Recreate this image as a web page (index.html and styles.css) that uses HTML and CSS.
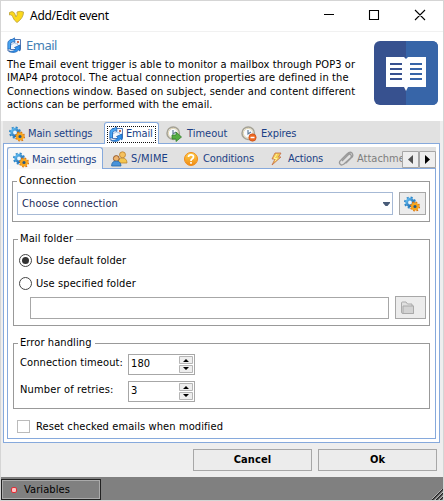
FILE: index.html
```
<!DOCTYPE html>
<html lang="en">
<head>
<meta charset="utf-8">
<title>Add/Edit event</title>
<link rel="stylesheet" href="styles.css">
</head>
<body>
<svg class="defs" width="0" height="0">
  <defs>
    <linearGradient id="blue" x1="0" y1="0" x2="1" y2="1"><stop offset="0" stop-color="#62bdf2"/><stop offset="1" stop-color="#155da5"/></linearGradient>
    <linearGradient id="gold" x1="0" y1="0" x2="0" y2="1"><stop offset="0" stop-color="#ffd34d"/><stop offset="1" stop-color="#ef8a13"/></linearGradient>
    <symbol id="gears" viewBox="0 0 16 16">
      <circle cx="6" cy="6.500" r="5" fill="none" stroke="#2b86c9" stroke-width="2" stroke-dasharray="2 1.930"/>
      <circle cx="6" cy="6.500" r="3.300" fill="#eaf5fd" stroke="url(#blue)" stroke-width="2.800"/>
      <circle cx="11" cy="10.500" r="4.200" fill="none" stroke="#d9710d" stroke-width="1.700" stroke-dasharray="1.700 1.600"/>
      <circle cx="11" cy="10.500" r="2.800" fill="#245984" stroke="#f8a51d" stroke-width="2.400"/>
    </symbol>
    <symbol id="mail" viewBox="0 0 16 16">
      <path d="M4.500 2.500h10v10h-10z" fill="#f2f7fd" stroke="#5579b5"/>
      <path d="M5 8l3-2M11 7l3 3M7 5l3 2 2-1" fill="none" stroke="#a9c4e5"/><path d="M11 4h2v2h-2z" fill="#c96d55"/>
      <path d="M8.500.8L9 5.500 7.500 4.500Q4 5 4.500 8.500V12H1.800V7Q1.500 3 6 2.500z" fill="#48a5f2" stroke="#1c62b4" stroke-width=".7"/>
      <path d="M3 14.500Q8 15 10 11.500L8.500 10.500 14 8v6l-1.500-1Q10 16.500 4 15z" fill="#2e8feb" stroke="#155cad" stroke-width=".7"/>
      <path d="M2 12v2h2" fill="none" stroke="#4d72ad"/>
    </symbol>
    <symbol id="clock" viewBox="0 0 16 16">
      <circle cx="7.200" cy="7.200" r="6.200" fill="#e9eef3" stroke="#a5a295" stroke-width="1.500"/>
      <circle cx="7.200" cy="7.200" r="4.800" fill="#f8fbff" stroke="#dccb9d" stroke-width=".8"/>
      <path d="M7 4v4l3-2" fill="none" stroke="#637d98" stroke-width="1.200"/>
    </symbol>
  </defs>
</svg>
<div class="window">
  <header class="titlebar">
    <svg class="logo" width="18" height="14" viewBox="0 0 18 14"><path d="M1.500 2.500Q4.500.5 6.500 3L8 7Q9.800 5 9 2q3-1.500 6.500 0Q15.500 8 9 12.500 6 10.500 4.500 6.500L3.500 5Q3 4.500 1.500 5z" fill="#fcd91a" stroke="#bfa640" stroke-width=".9"/></svg>
    <span class="title">Add/Edit event</span>
    <svg class="controls" width="102" height="12" viewBox="0 0 102 12"><path d="M0 5.500h10M45.500 1.500h9v9h-9zM91 1l10 10M101 1L91 11" fill="none" stroke="#000" stroke-width="1.100"/></svg>
  </header>
  <section class="intro">
    <div class="intro-main">
      <h1><svg width="16" height="16"><use href="#mail"/></svg><span>Email</span></h1>
      <p><span class="l1">The Email event trigger is able to monitor a mailbox through POP3 or</span><br><span class="l2">IMAP4 protocol. The actual connection properties are defined in the</span><br><span class="l3">Connections window. Based on subject, sender and content different</span><br><span class="l4">actions can be performed with the email.</span></p>
    </div>
    <svg class="book" width="64" height="64" viewBox="0 0 64 64">
      <rect width="64" height="64" rx="6" fill="#37518f"/><path d="M32 0h26q6 0 6 6v52q0 6-6 6H32z" fill="#3765a8"/>
      <path d="M12 16h18l2 2 2-2h18v30H34l-2 4-2-4H12z" fill="#fff"/>
      <path d="M16 23h12M16 28h12M16 33h12M16 38h12" stroke="#37518f" stroke-width="2"/><path d="M36 23h12M36 28h12M36 33h12M36 38h12" stroke="#3765a8" stroke-width="2"/>
    </svg>
  </section>
  <main class="outer">
    <nav class="tabs outer-tabs">
      <div class="tab t-main"><svg width="16" height="16"><use href="#gears"/></svg><span>Main settings</span></div>
      <div class="tab active t-email"><div class="focus"><svg width="16" height="16"><use href="#mail"/></svg><span>Email</span></div></div>
      <div class="tab t-timeout"><svg width="16" height="16" viewBox="0 0 16 16"><use href="#clock"/><path d="M6 9h4V6l5.500 5-5.500 4.500V13H6z" fill="#55ad43" stroke="#347e2d" stroke-width=".8"/></svg><span>Timeout</span></div>
      <div class="tab t-expires"><svg width="16" height="16" viewBox="0 0 16 16"><use href="#clock"/><circle cx="11.500" cy="11.500" r="3.700" fill="#ed6820" stroke="#c54a16" stroke-width=".6"/><path d="M9.500 11.500h4" stroke="#fff" stroke-width="1.500"/></svg><span>Expires</span></div>
    </nav>
    <div class="outer-page">
      <nav class="tabs inner-tabs">
        <div class="tab active i-main"><svg width="16" height="16"><use href="#gears"/></svg><span>Main settings</span></div>
        <div class="tab i-smime"><svg width="17" height="16" viewBox="0 0 17 16"><circle cx="11.500" cy="3.800" r="3" fill="#f6c15c" stroke="#b9802c" stroke-width=".8"/><path d="M7 12q0-5 4-5 5 0 5 5z" fill="#f5c64e" stroke="#ba8731" stroke-width=".8"/><circle cx="5.300" cy="7.500" r="2.900" fill="#efb56e" stroke="#8a5128" stroke-width=".9"/><path d="M.6 15q0-5 4.600-5T10 15z" fill="#4993da" stroke="#2767a7" stroke-width=".8"/></svg><span>S/MIME</span></div>
        <div class="tab i-cond"><svg width="16" height="16" viewBox="0 0 16 16"><circle cx="8" cy="8" r="6.500" fill="url(#gold)" stroke="#f18a19"/><path d="M5.500 6q0-2.200 2.500-2.200T10.500 6Q10.500 7 9 8 8 8.600 8 10M8 11v1.700" fill="none" stroke="#fff" stroke-width="1.700"/></svg><span>Conditions</span></div>
        <div class="tab i-act"><svg width="16" height="16" viewBox="0 0 16 16"><path d="M6 2h6L9.500 6H12L3 14l3-6H3z" fill="#f3cd50" stroke="#c46b48" stroke-width=".8"/><path d="M8 3L5 7.500h3L6 10" fill="none" stroke="#fff39b"/></svg><span>Actions</span></div>
        <div class="tab i-att"><svg width="16" height="16" viewBox="0 0 16 16"><path d="M4 10l6-6q2-2 3 0t-1 3.500L6 13q-3 2-4 0-1.500-2 1-4L9 3q3-3 5-1 2 3-1 5l-5 5" fill="none" stroke="#999" stroke-width="1.300"/></svg><span>Attachments</span></div>
        <svg class="scroll" width="34" height="17" viewBox="0 0 34 17"><path d="M.5.5h16v16H.5zM17.500.5h16v16h-16z" fill="#eee" stroke="#a7a7a7"/><path d="M11 4v9L6 8.500z" fill="#505050"/><path d="M23 4v9l5-4.500z"/></svg>
      </nav>
      <div class="inner-page">
        <fieldset class="connection"><legend>Connection</legend>
          <div class="row"><div class="combo"><span>Choose connection</span><svg width="7" height="4" viewBox="0 0 7 4"><path d="M0 0h7v1L4.500 4h-2L0 1z" fill="#485b78"/></svg></div><button class="gear-btn"><svg width="16" height="16"><use href="#gears"/></svg></button></div>
        </fieldset>
        <fieldset class="folder"><legend>Mail folder</legend>
          <label class="radio"><i class="checked"></i><span>Use default folder</span></label>
          <label class="radio second"><i></i><span>Use specified folder</span></label>
          <div class="row path-row"><div class="path"></div><button class="folder-btn"><svg width="16" height="14" viewBox="0 0 16 14"><path d="M1.500 11V2q0-1 1-1H6l1.500 2H12v2h1.500v7.500H3q-1.500 0-1.500-1.500z" fill="#e0e0e0" stroke="#ababab"/><path d="M3 5h10.500v7.500H3z" fill="#d3d3d3" stroke="#aaa"/></svg></button></div>
        </fieldset>
        <fieldset class="errors"><legend>Error handling</legend>
          <div class="spin-row"><span>Connection timeout:</span><div class="spin"><span>180</span><svg width="14" height="17" viewBox="0 0 14 17"><path d="M.5.5h13v7H.5zM.5 9.500h13v7H.5z" fill="#eee" stroke="#b5b5b5"/><path d="M4 6h6L7 3zM4 11h6l-3 3z"/></svg></div></div>
          <div class="spin-row retries"><span>Number of retries:</span><div class="spin"><span>3</span><svg width="14" height="17" viewBox="0 0 14 17"><path d="M.5.5h13v7H.5zM.5 9.500h13v7H.5z" fill="#eee" stroke="#b5b5b5"/><path d="M4 6h6L7 3zM4 11h6l-3 3z"/></svg></div></div>
        </fieldset>
        <label class="check"><i></i><span>Reset checked emails when modified</span></label>
      </div>
    </div>
  </main>
  <div class="actions"><button>Cancel</button><button>Ok</button></div>
  <footer><div class="variables"><i></i><span>Variables</span></div><svg class="grip" width="11" height="11" viewBox="0 0 11 11"><path d="M0 11L11 0M4 11l7-7M8 11l3-3" stroke="#222" stroke-width="1.500"/><path d="M-1 11L11-1M3 11l8-8M7 11l4-4" stroke="#ddd" stroke-width=".7"/></svg></footer>
</div>
</body>
</html>
```
FILE: styles.css
```
* { box-sizing: border-box; }
body { margin: 0; font: 11px/14px "DejaVu Sans Condensed", "DejaVu Sans", sans-serif; font-stretch: condensed; letter-spacing: .1px; color: #000; overflow: hidden; }
svg { display: block; flex: none; }
.defs { position: absolute; }
span { white-space: nowrap; }
button { font: inherit; letter-spacing: inherit; margin: 0; padding: 0; border: 1px solid #a7a7a7; background: #ececec; border-radius: 0; }
.window { width: 444px; height: 501px; border: 1px solid #d5d5d5; background: #eee; display: flex; flex-direction: column; }
.titlebar { height: 31px; background: #fff; border-bottom: 1px solid #f1f1f1; display: flex; align-items: center; padding: 0 17px 0 7px; }
.logo { margin-top: 1px; }
.title { font: 12px/16px "Noto Sans", sans-serif; letter-spacing: -.28px; margin-left: 4px; }
.controls { margin-left: auto; margin-top: -2px; }
.intro { height: 89px; background: #fff; display: flex; justify-content: space-between; padding: 5px 5px 0 5px; }
h1 { font: 13px/16px "Noto Sans", sans-serif; letter-spacing: -.5px; color: #447fb5; margin: 0 0 5px; display: flex; gap: 4px; }
.intro p { margin: 0 0 0 1px; line-height: 13.300px; }
.l1 { letter-spacing: .075px; }
.l2 { letter-spacing: .105px; }
.l3 { letter-spacing: .12px; }
.l4 { letter-spacing: .03px; }
.book { margin-top: 4px; }
.outer { margin: 0 3px 0 2px; height: 322px; }
.tabs { display: flex; background: #e1e1e1; color: #1b3f85; letter-spacing: -.15px; }
.tab { display: flex; align-items: center; gap: 3px; }
.outer-tabs { height: 22px; }
.tab.active { background: #fff; border: 1px solid #86a9dc; border-bottom: 0; border-radius: 3px 3px 0 0; position: relative; }
.t-main { width: 101px; padding: 4px 0 0 6px; }
.tab.t-email { width: 55px; margin-top: 1px; height: 22px; padding: 2px 2px 1px 2px; }
.focus { display: flex; align-items: center; gap: 2px; width: 49px; height: 17px; border: 1px dotted #111; }
.t-timeout { padding: 4px 0 0 7px; width: 75px; gap: 5px; letter-spacing: 0; }
.t-expires { padding: 4px 0 0 7px; gap: 4px; }
.outer-page { height: 300px; border: 1px solid #86a9dc; padding: 3px; background: #fff; }
.inner-tabs { height: 21px; }
.inner-tabs .active { height: 22px; background: #f7f7f7; }
.i-main { width: 96px; padding: 2px 0 0 5px; }
.i-smime { width: 72px; padding: 2px 0 0 8px; gap: 3px; letter-spacing: .2px; }
.i-cond { width: 86px; padding: 2px 0 0 8px; gap: 4px; }
.i-act { width: 69px; padding: 2px 0 0 8px; gap: 3px; }
.i-att { width: 72px; padding: 2px 0 0 8px; gap: 3px; color: #7d7d7d; overflow: hidden; letter-spacing: 0; }
.scroll { margin-top: 4px; }
.inner-page { height: 271px; border: 1px solid #86a9dc; background: #fff; padding: 5px 5px 0 4px; }
fieldset { border: 1px solid #999; margin: 0; padding: 0; min-width: 0; }
legend { height: 15px; line-height: 14px; padding: 0 3px 0 2px; margin-left: 4px; }
.row { display: flex; justify-content: space-between; }
.connection { height: 48px; }
.connection .row { padding: 3px 3px 0 4px; }
.combo { width: 376px; height: 23px; border: 1px solid #a6b9d5; display: flex; align-items: center; justify-content: space-between; padding: 0 2px 0 4px; color: #202a5a; }
.gear-btn { width: 27px; height: 23px; padding-left: 4px; }
.folder { height: 94px; margin: 10px 0 0 1px; }
.radio { display: flex; align-items: center; height: 13px; gap: 4px; margin: 7px 0 0 5px; }
.radio.second { margin-top: 10px; }
.radio i { width: 13px; height: 13px; border: 1px solid #444; border-radius: 50%; padding: 2px; background-clip: content-box; }
.radio .checked { background-color: #333; }
.path-row { padding: 6px 3px 0 16px; }
.path { width: 359px; height: 22px; margin-top: 1px; border: 1px solid #a7a7a7; }
.folder-btn { width: 31px; height: 23px; padding-left: 4px; }
.errors { height: 73px; margin: 10px 0 0 1px; padding-top: 3px; }
.spin-row { display: flex; justify-content: space-between; width: 181px; height: 21px; padding-left: 6px; margin-bottom: 6px; line-height: 18px; }
.retries { letter-spacing: .15px; }
.spin { width: 67px; height: 21px; border: 1px solid #a7a7a7; display: flex; justify-content: space-between; padding: 1px 1px 0 2px; line-height: 16px; }
.check { display: flex; gap: 6px; margin: 11px 0 0 5px; height: 13px; }
.check i { width: 13px; height: 13px; border: 1px solid #bbb; }
.actions { height: 34px; padding: 6px 6px 0 0; display: flex; justify-content: flex-end; gap: 6px; }
.actions button { width: 119px; height: 22px; font-weight: bold; }
footer { height: 23px; background: #808080; display: flex; justify-content: space-between; align-items: flex-end; }
.variables { width: 100px; height: 21px; border: 1px solid #222; box-shadow: inset 1px 1px #aaa, inset -1px -1px #aaa; display: flex; align-items: center; gap: 7px; padding-left: 9px; }
.variables i { width: 6px; height: 6px; border: 1px solid #e22d36; background: #ffc4c4; border-radius: 2px; }
```
